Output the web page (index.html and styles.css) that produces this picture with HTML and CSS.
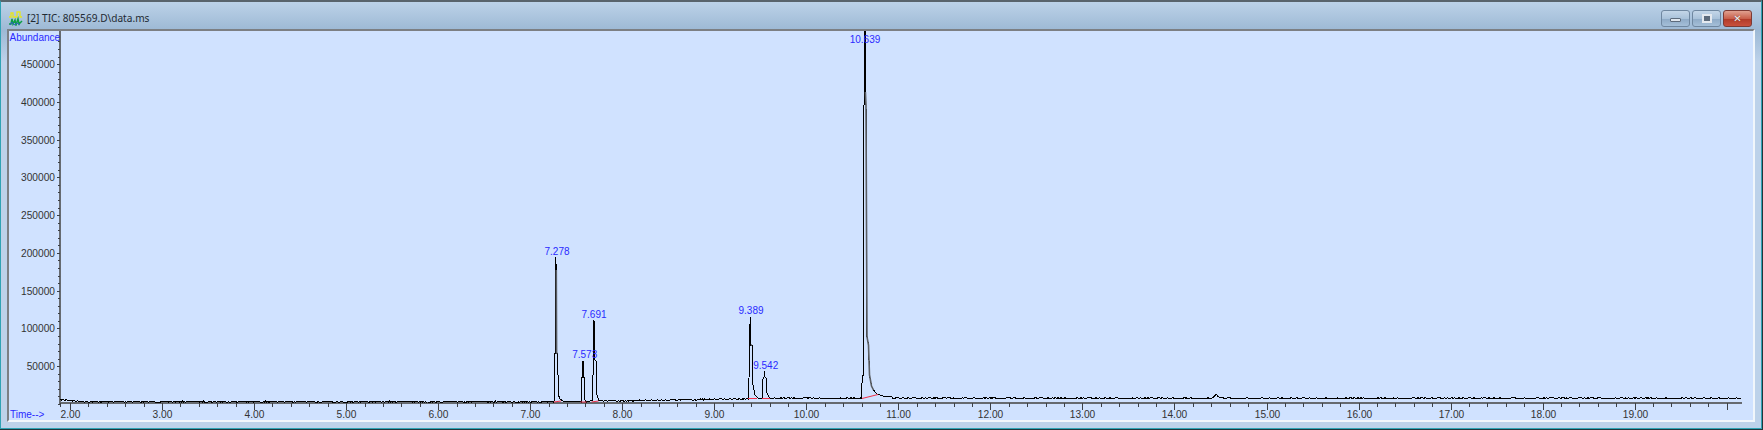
FILE: index.html
```html
<!DOCTYPE html>
<html lang="en">
<head>
    <meta charset="UTF-8">
    <meta name="viewport" content="width=device-width, initial-scale=1.0">
    <title>[2] TIC: 805569.D\data.ms</title>
    <link rel="stylesheet" href="styles.css">
</head>
<body>
    <div class="window">
        <div class="titlebar">
            <svg class="app-icon" viewBox="0 0 15 15" width="15" height="15">
                <polyline points="1,6 3,6 3,2 5,2 5,6 9,6 9,1 12,1 12,6 14,6" fill="none" stroke="#e6e61e" stroke-width="1.3"/>
                <polyline points="1,13 3,13 4,8 5,13 7,9 8,14 10,8 11,13 14,10" fill="none" stroke="#0e9f45" stroke-width="1.5"/>
                <polyline points="2,14 4,11 6,14 9,12 12,14" fill="none" stroke="#2a5fc4" stroke-width="1"/>
            </svg>
            <span class="title-text">[2] TIC: 805569.D\data.ms</span>
            <div class="controls">
                <div class="ctl-btn"><span class="glyph-min"></span></div>
                <div class="ctl-btn"><span class="glyph-max"></span></div>
                <div class="ctl-btn close"><span class="glyph-close">&#10005;</span></div>
            </div>
        </div>
        <div class="plot-panel">
            <svg id="chart" class="chart" viewBox="9 31 1744 389" preserveAspectRatio="none"></svg>
        </div>
    </div>
    <script src="chart.js"></script>
</body>
</html>
```

FILE: styles.css
```css
html, body {
    margin: 0;
    padding: 0;
    height: 100%;
    overflow: hidden;
}
body {
    background-color: #20363c;
    font-family: "Liberation Sans", Arial, sans-serif;
}
.window {
    box-sizing: border-box;
    width: 1762px;
    height: 429px;
    display: flex;
    flex-direction: column;
    padding: 0 6px 6px 6px;
    background: linear-gradient(#bcd2e8 0, #9db9d5 28px, #bdd2ea 60px);
    border: 1px solid #2fa3b5;
    border-top: 2px solid #59646c;
}
.titlebar {
    height: 27px;
    display: flex;
    align-items: center;
    flex-shrink: 0;
}
.app-icon {
    margin: 5px 4px 0 1px;
}
.title-text {
    font-family: "Noto Sans", sans-serif;
    font-size: 10.1px;
    color: #1f2a33;
    margin-top: 5px;
}
.controls {
    margin-left: auto;
    margin-right: 3px;
    margin-top: 6px;
    display: flex;
    gap: 2px;
}
.ctl-btn {
    box-sizing: border-box;
    width: 29px;
    height: 17px;
    display: flex;
    align-items: center;
    justify-content: center;
    border: 1px solid #6f87a0;
    border-radius: 3px;
    background: linear-gradient(#c4d6e8, #a9c2da 50%, #8eaac6 52%, #a5bfd8);
}
.ctl-btn.close {
    border-color: #7c3a34;
    background: linear-gradient(#e0a090, #c9604c 50%, #b03a28 52%, #c8503c);
}
.glyph-min {
    width: 11px;
    height: 4px;
    margin-top: 2px;
    background-color: #dfe6ee;
    border: 1px solid #5d6b7c;
    box-sizing: border-box;
    border-radius: 1px;
}
.glyph-max {
    width: 10px;
    height: 9px;
    box-sizing: border-box;
    background-color: #5d6b7c;
    border: 2px solid #e4e9ef;
}
.glyph-close {
    color: #f2f2f2;
    font-family: "DejaVu Sans", sans-serif;
    font-weight: bold;
    font-size: 10px;
    line-height: 1;
    text-shadow: 0 0 1px #55231c;
}
.plot-panel {
    flex: 1;
    min-height: 0;
    display: flex;
    background-color: #d0e2ff;
    border-top: 2px solid #7c7f84;
    border-left: 2px solid #7c7f84;
    border-right: 2px solid #f1f6fb;
    border-bottom: 2px solid #f1f6fb;
}
.chart {
    flex: 1;
    min-width: 0;
    display: block;
}
.num {
    font-family: "Liberation Sans", Arial, sans-serif;
    font-size: 10.2px;
    fill: #333;
}
.peak-label, .axis-name {
    font-family: "Liberation Sans", Arial, sans-serif;
    font-size: 10px;
    fill: #2a2aff;
}
.axis-line {
    stroke: #666a70;
    stroke-width: 2;
}
.tick {
    stroke: #3c4046;
    stroke-width: 1;
}
.trace {
    fill: none;
    stroke: #000;
    stroke-width: 1;
    shape-rendering: crispEdges;
}
.peak {
    fill: none;
    stroke: #5a5e64;
    stroke-width: 1.6;
}
.integ {
    fill: none;
    stroke: #f0304a;
    stroke-width: 1;
}
```

FILE: chart.js
```js
const svg = document.getElementById('chart');
const NS = 'http://www.w3.org/2000/svg';

const axisX = 60;
const axisY = 403;
const timeX = t => 70 + (t - 2) * 92.04;
const abundY = v => 403.9 - v * 0.000755;

function add(tag, attrs, text) {
    const el = document.createElementNS(NS, tag);
    for (const k in attrs) el.setAttribute(k, attrs[k]);
    if (text) el.textContent = text;
    svg.appendChild(el);
    return el;
}

// y axis
add('line', {x1: axisX, y1: 31, x2: axisX, y2: axisY + 1, class: 'axis-line'});
for (let v = 0; v <= 480000; v += 10000) {
    const y = Math.round(abundY(v)) + 0.5;
    if (y < 34) break;
    const major = v % 50000 === 0 && v > 0;
    add('line', {x1: major ? 57 : 58, y1: y, x2: 60, y2: y, class: 'tick'});
    if (major) add('text', {x: 55, y: y + 3.5, 'text-anchor': 'end', class: 'num'}, String(v));
}

// x axis
add('line', {x1: 59, y1: axisY, x2: 1742, y2: axisY, class: 'axis-line'});
for (let i = 0; i <= 90; i++) {
    const t = 2 + i * 0.2;
    const x = Math.round(timeX(t)) + 0.5;
    const major = i % 5 === 0;
    add('line', {x1: x, y1: axisY, x2: x, y2: axisY + (major ? 7 : 4), class: 'tick'});
    if (major && i < 90) {
        add('text', {x: x, y: 418, 'text-anchor': 'middle', class: 'num'}, (t).toFixed(2));
    }
}
// the scale starts a little before 2.00
add('line', {x1: 60.5, y1: axisY, x2: 60.5, y2: axisY + 4, class: 'tick'});

add('text', {x: 9.5, y: 41, class: 'axis-name'}, 'Abundance');
add('text', {x: 10, y: 418, class: 'axis-name'}, 'Time-->');

// baseline of the trace, y in page pixels
function base(x) {
    if (x < 85) return 399.5 + (x - 60) * 0.09;
    if (x < 560) return 401.7;
    if (x < 780) return 401.7 - (x - 560) * 0.0155;
    return 398.2;
}

let seed = 7;
function rnd() {
    seed = (seed * 16807) % 2147483647;
    return seed / 2147483647 - 0.5;
}

// peak outlines as x, y pairs, apex is the index of the top point
const peaks = [
    {apex: 3, pts: [[554, 402], [554.6, 353], [555.4, 353], [555.7, 257], [556.3, 270], [556.6, 353], [557.6, 353], [558.4, 395], [560, 399], [563, 401]]},
    {apex: 3, pts: [[581.6, 402], [582, 377], [582.8, 377], [583, 361], [583.6, 377], [584.4, 377], [585, 400], [586.5, 402]]},
    {apex: 3, pts: [[592, 401], [592.8, 393], [593.4, 343], [594, 320], [594.8, 360], [596, 361], [597, 395], [598.5, 400]]},
    {apex: 3, pts: [[748.5, 399], [749, 379], [749.6, 333], [750.3, 317], [750.9, 345], [752, 345], [753, 385], [755, 395], [758, 398]]},
    {apex: 3, pts: [[762, 398], [763, 379], [764, 377], [764.4, 371], [765, 377], [766, 378], [767, 393], [769, 397]]},
    {apex: 5, pts: [[861.5, 398], [862.3, 375], [863.7, 375], [864, 105], [864.6, 92], [865, 31], [865.4, 92], [866, 105], [867, 337], [868.5, 345], [869.5, 375], [871.5, 386], [873.5, 390], [877, 394], [883, 396], [892, 397]]}
];

// trace, walking left to right, drops into each peak outline when reached
const pts = [];
let x = 60.5;
let pi = 0;
while (x < 1742) {
    if (pi < peaks.length && x >= peaks[pi].pts[0][0]) {
        for (const p of peaks[pi].pts) pts.push(p[0] + ',' + p[1]);
        x = peaks[pi].pts[peaks[pi].pts.length - 1][0] + 1;
        pi++;
        continue;
    }
    let y = base(x) + rnd() * 1.2;
    if (x > 1212 && x < 1220) y -= (4 - Math.abs(x - 1216)) * 0.85;
    pts.push(x.toFixed(1) + ',' + y.toFixed(1));
    x += 1;
}
add('polyline', {points: pts.join(' '), class: 'trace'});

// falling side of each peak reads as a heavier grey line
for (const p of peaks) {
    const side = p.pts.slice(p.apex + 1, p.pts.length - 3).map(q => q.join(','));
    add('polyline', {points: side.join(' '), class: 'peak'});
}

// integration baselines
const integ = [
    [554, 402, 561, 401], [580.5, 402, 586.5, 402], [591.5, 402, 598.5, 401],
    [748, 398.5, 757, 398.5], [762, 398.5, 770, 398.5], [862, 398.5, 878, 394.5]
];
for (const s of integ) {
    add('line', {x1: s[0], y1: s[1], x2: s[2], y2: s[3], class: 'integ'});
}

// peak labels: retention time, centre x, baseline y
const labels = [
    ['7.278', 557, 255], ['7.573', 584.7, 358], ['7.691', 594, 317.7],
    ['9.389', 751, 314], ['9.542', 765.7, 369], ['10.639', 865, 42.5]
];
for (const l of labels) {
    add('text', {x: l[1], y: l[2], 'text-anchor': 'middle', class: 'peak-label'}, l[0]);
}
```
